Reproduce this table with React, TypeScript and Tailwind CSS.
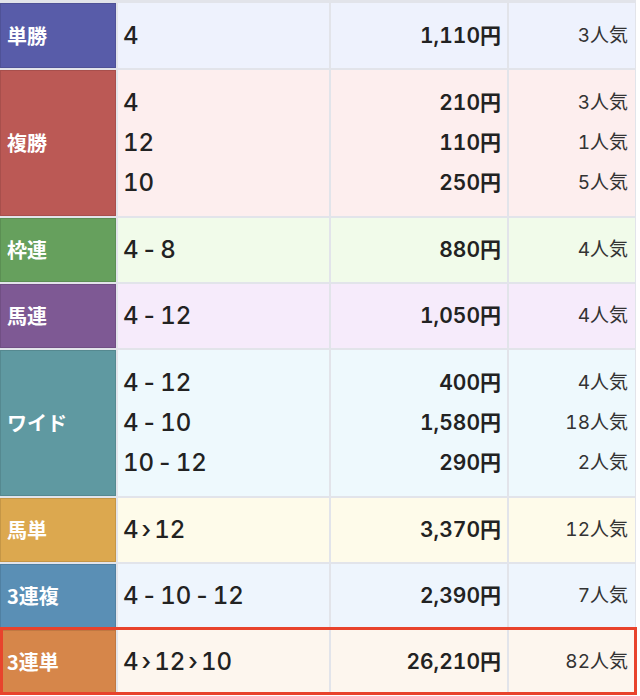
type Line = [string, string, string];

type Row = {
  label: string;
  labelClass: string;
  rowClass: string;
  lines: Line[];
  highlight?: boolean;
};

const rows: Row[] = [
  {
    label: "単勝",
    labelClass: "bg-[#585ca9]",
    rowClass: "bg-[#eef2fd]",
    lines: [["4", "1,110円", "3人気"]],
  },
  {
    label: "複勝",
    labelClass: "bg-[#bb5955]",
    rowClass: "bg-[#fdeeee]",
    lines: [
      ["4", "210円", "3人気"],
      ["12", "110円", "1人気"],
      ["10", "250円", "5人気"],
    ],
  },
  {
    label: "枠連",
    labelClass: "bg-[#66a05d]",
    rowClass: "bg-[#f1fbea]",
    lines: [["4-8", "880円", "4人気"]],
  },
  {
    label: "馬連",
    labelClass: "bg-[#7e5994]",
    rowClass: "bg-[#f6ebfb]",
    lines: [["4-12", "1,050円", "4人気"]],
  },
  {
    label: "ワイド",
    labelClass: "bg-[#5f99a1]",
    rowClass: "bg-[#eef9fd]",
    lines: [
      ["4-12", "400円", "4人気"],
      ["4-10", "1,580円", "18人気"],
      ["10-12", "290円", "2人気"],
    ],
  },
  {
    label: "馬単",
    labelClass: "bg-[#dca84f]",
    rowClass: "bg-[#fefbea]",
    lines: [["4›12", "3,370円", "12人気"]],
  },
  {
    label: "3連複",
    labelClass: "bg-[#5a8fb5]",
    rowClass: "bg-[#eef5fd]",
    lines: [["4-10-12", "2,390円", "7人気"]],
  },
  {
    label: "3連単",
    labelClass: "bg-[#d6864a]",
    rowClass: "bg-[#fdf6ee]",
    lines: [["4›12›10", "26,210円", "82人気"]],
    highlight: true,
  },
];

// splits "4-12" / "4›12" so the separator gets some room either side
const Combo = ({ text }: { text: string }) => {
  const parts = text.split(/([-›])/);
  return (
    <>
      {parts.map((p, i) =>
        p === "-" || p === "›" ? (
          <span key={i} className="mx-[3px]">
            {p}
          </span>
        ) : (
          <span key={i}>{p}</span>
        )
      )}
    </>
  );
};

const PayoutRow = ({ row, first }: { row: Row; first: boolean }) => {
  const tall = row.lines.length > 1;
  const h = tall ? "h-[146px]" : first ? "h-[65px]" : "h-[64px]";

  return (
    <div className={`relative flex gap-[2px] ${h}`}>
      <div
        className={`w-[116px] shrink-0 flex items-center pl-[6px] border border-black/10 text-white font-bold text-[20px] ${row.labelClass}`}
        style={{ fontFamily: '"Noto Sans CJK JP", sans-serif' }}
      >
        {row.label}
      </div>
      <div
        className={`w-[211px] shrink-0 flex flex-col justify-center pl-[5px] text-[#222] text-[24px] font-medium tabular-nums ${row.rowClass}`}
      >
        {row.lines.map((l, i) => (
          <div key={i} className="leading-[40px]">
            <Combo text={l[0]} />
          </div>
        ))}
      </div>
      <div
        className={`w-[176px] shrink-0 flex flex-col justify-center items-end pr-[6px] text-[#222] text-[21px] font-semibold tabular-nums ${row.rowClass}`}
      >
        {row.lines.map((l, i) => (
          <div key={i} className="leading-[40px]">
            {l[1]}
          </div>
        ))}
      </div>
      <div
        className={`w-[126px] shrink-0 flex flex-col justify-center items-end pr-[7px] text-[#333] text-[19px] tabular-nums ${row.rowClass}`}
      >
        {row.lines.map((l, i) => (
          <div key={i} className="leading-[40px]">
            {l[2]}
          </div>
        ))}
      </div>
      {row.highlight && (
        <div className="absolute -top-[3px] left-0 -right-[2px] -bottom-[1px] border-[3px] border-[#e8432c] pointer-events-none" />
      )}
    </div>
  );
};

export default function App() {
  return (
    <div
      className="w-[640px] h-[696px] overflow-hidden bg-white"
      style={{ fontFamily: 'Inter, "Noto Sans CJK JP", sans-serif' }}
    >
      <div className="w-[636px] flex flex-col gap-[2px] bg-[#e2e4ea] pt-[3px] pr-[1px]">
        {rows.map((r, i) => (
          <PayoutRow key={r.label} row={r} first={i === 0} />
        ))}
      </div>
    </div>
  );
}
